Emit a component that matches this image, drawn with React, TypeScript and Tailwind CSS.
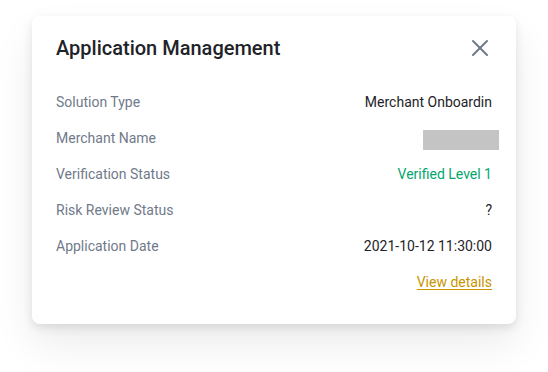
import { X } from 'lucide-react'

const rows = [
  { label: 'Solution Type', value: 'Merchant Onboardin', kind: 'text' },
  { label: 'Merchant Name', value: '', kind: 'mask' },
  { label: 'Verification Status', value: 'Verified Level 1', kind: 'green' },
  { label: 'Risk Review Status', value: '?', kind: 'text' },
  { label: 'Application Date', value: '2021-10-12 11:30:00', kind: 'text' },
]

export default function App() {
  return (
    <div className="min-h-[372px] bg-white pl-8 pt-4" style={{ fontFamily: 'Roboto, "Noto Sans", sans-serif' }}>
      <div className="w-[484px] rounded-lg bg-white pb-6 shadow-[0_4px_10px_rgba(0,0,0,0.1),0_20px_40px_rgba(0,0,0,0.08)]">
        {/* Header */}
        <div className="flex h-16 items-center justify-between px-6">
          <h2 className="text-[20px] font-medium leading-7 text-[#1E2329]">Application Management</h2>
          <button className="mr-[-2px] flex h-7 w-7 items-center justify-center text-[#707A8A]">
            <X className="h-7 w-7" strokeWidth={1.7} />
          </button>
        </div>

        {/* Rows */}
        <div className="mt-1 px-6">
          {rows.map((r) => (
            <div key={r.label} className="flex h-9 items-center justify-between text-sm">
              <span className="text-[#707A8A]">{r.label}</span>
              {r.kind === 'mask' && <span className="mr-[-7px] mt-1 h-5 w-[76px] bg-[#C4C4C4]" />}
              {r.kind === 'green' && <span className="text-[#03A66D]">{r.value}</span>}
              {r.kind === 'text' && <span className="text-[#1E2329]">{r.value}</span>}
            </div>
          ))}
          <div className="flex h-9 items-center justify-end text-sm">
            <a className="cursor-pointer text-[#C99400] underline underline-offset-2">View details</a>
          </div>
        </div>
      </div>
    </div>
  )
}
